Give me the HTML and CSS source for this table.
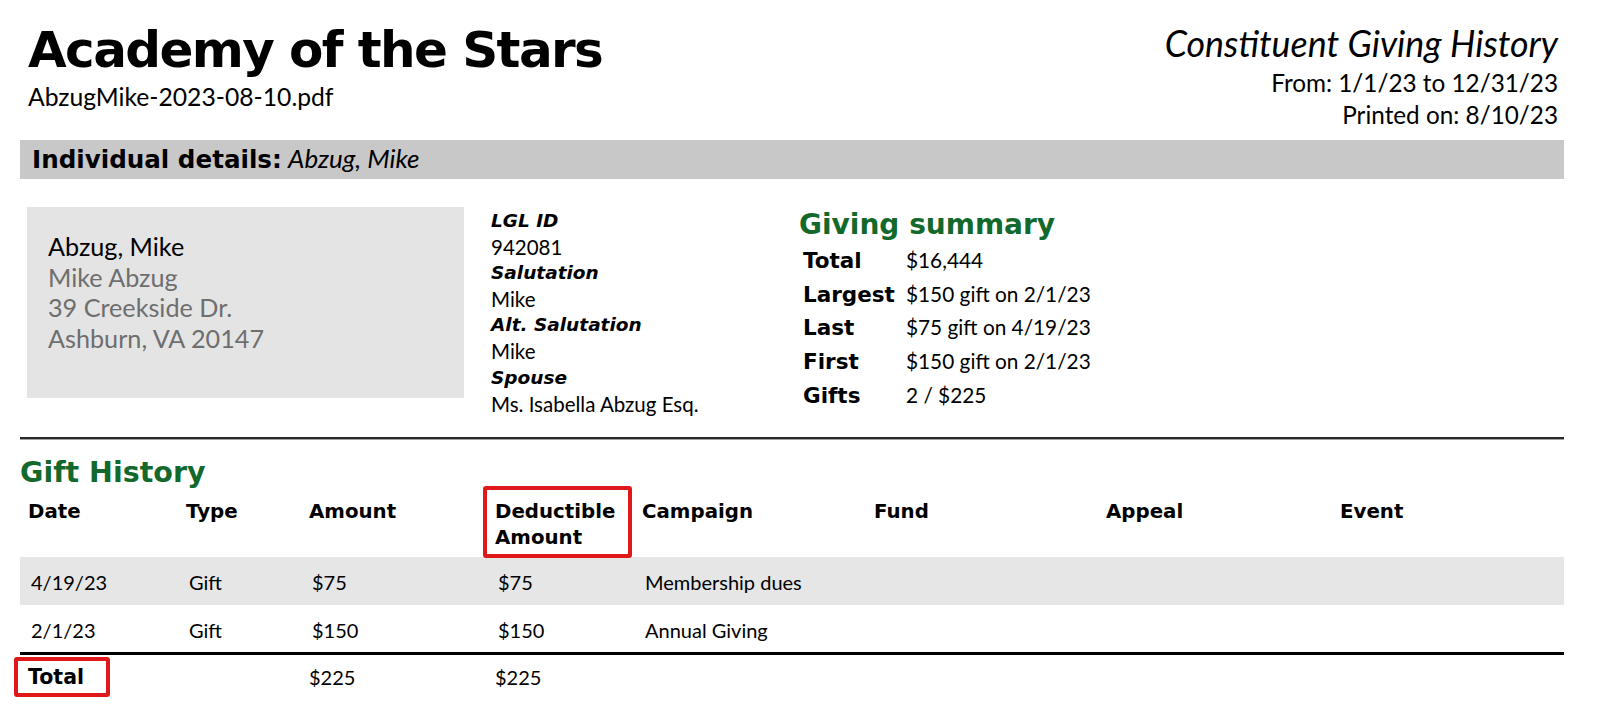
FILE: index.html
```html
<!DOCTYPE html>
<html lang="en">
<head>
<meta charset="utf-8">
<title>Constituent Giving History</title>
<link rel="stylesheet" href="styles.css">
</head>
<body>
<div class="page">
  <header class="top">
    <div class="org">
      <h1 class="org-name">Academy of the Stars</h1>
      <div class="file-name">AbzugMike-2023-08-10.pdf</div>
    </div>
    <div class="report">
      <div class="report-title">Constituent Giving History</div>
      <div class="report-line range">From: 1/1/23 to 12/31/23</div>
      <div class="report-line">Printed on: 8/10/23</div>
    </div>
  </header>

  <div class="section-bar"><b class="bar-label">Individual details:</b> <i class="bar-name">Abzug, Mike</i></div>

  <section class="details">
    <div class="address">
      <div class="addr-name">Abzug, Mike</div>
      <div class="addr-line">Mike Abzug</div>
      <div class="addr-line">39 Creekside Dr.</div>
      <div class="addr-line">Ashburn, VA 20147</div>
    </div>
    <dl class="ids">
      <dt>LGL ID</dt><dd>942081</dd>
      <dt>Salutation</dt><dd>Mike</dd>
      <dt>Alt. Salutation</dt><dd>Mike</dd>
      <dt>Spouse</dt><dd>Ms. Isabella Abzug Esq.</dd>
    </dl>
    <div class="summary">
      <h2 class="green-title">Giving summary</h2>
      <div class="sum-grid">
        <div class="sum-label">Total</div><div class="sum-val">$16,444</div>
        <div class="sum-label">Largest</div><div class="sum-val">$150 gift on 2/1/23</div>
        <div class="sum-label">Last</div><div class="sum-val">$75 gift on 4/19/23</div>
        <div class="sum-label">First</div><div class="sum-val">$150 gift on 2/1/23</div>
        <div class="sum-label">Gifts</div><div class="sum-val">2 / $225</div>
      </div>
    </div>
  </section>

  <hr class="rule">

  <h2 class="green-title history-title">Gift History</h2>
  <table class="gifts">
    <colgroup>
      <col class="c-date"><col class="c-type"><col class="c-amt"><col class="c-ded">
      <col class="c-camp"><col class="c-fund"><col class="c-appeal"><col class="c-event">
    </colgroup>
    <thead>
      <tr>
        <th>Date</th><th>Type</th><th>Amount</th>
        <th class="marked">Deductible<br>Amount</th>
        <th>Campaign</th><th>Fund</th><th>Appeal</th><th>Event</th>
      </tr>
    </thead>
    <tbody>
      <tr class="stripe">
        <td>4/19/23</td><td>Gift</td><td>$75</td><td>$75</td><td>Membership dues</td><td></td><td></td><td></td>
      </tr>
      <tr>
        <td>2/1/23</td><td>Gift</td><td>$150</td><td>$150</td><td>Annual Giving</td><td></td><td></td><td></td>
      </tr>
    </tbody>
    <tfoot>
      <tr>
        <th class="marked-total">Total</th><td></td><td>$225</td><td>$225</td><td></td><td></td><td></td><td></td>
      </tr>
    </tfoot>
  </table>
</div>
</body>
</html>
```

FILE: styles.css
```css
*, *::before, *::after { box-sizing: border-box; }

html, body {
  margin: 0;
  padding: 0;
  background: #ffffff;
}

body {
  font-family: "Lato", "Open Sans", "DejaVu Sans", sans-serif;
  color: #000;
}

.page {
  width: 1544px;
  margin-left: 20px;
  padding-bottom: 20px;
}

/* bold text uses a heavier, wider face */
.org-name,
.bar-label,
.ids dt,
.green-title,
.sum-label,
.gifts thead th,
.gifts tfoot th {
  font-family: "DejaVu Sans", "Lato", sans-serif;
  font-weight: 700;
}

/* ---------- header ---------- */
.top {
  display: flex;
  justify-content: space-between;
  align-items: flex-start;
  padding: 20px 6px 0 8px;
  height: 140px;
}

.org-name {
  margin: 0;
  font-size: 50px;
  line-height: 60px;
  letter-spacing: -1.6px;
}

.file-name {
  margin-top: 2px;
  font-size: 24.7px;
  line-height: 30px;
}

.report {
  text-align: right;
  padding-top: 3px;
}

.report-title {
  font-size: 35.8px;
  line-height: 42px;
  font-style: italic;
}

.report-line {
  font-size: 24.3px;
  line-height: 32px;
}

.report-line.range {
  margin-top: 2px;
}

/* ---------- section bar ---------- */
.section-bar {
  background: #c8c8c8;
  height: 39px;
  padding: 0 12px;
  font-size: 24px;
  line-height: 37px;
  white-space: nowrap;
}

.bar-label {
  font-size: 24.6px;
}

.bar-name {
  font-size: 26px;
}

/* ---------- details ---------- */
.details {
  display: flex;
  align-items: flex-start;
  margin-top: 28px;
}

.address {
  width: 437px;
  height: 191px;
  margin-left: 7px;
  background: #e4e4e4;
  padding: 24px 21px 0;
  font-size: 25.2px;
  line-height: 30.6px;
}

.addr-name { color: #000; }
.addr-line { color: #6e6e6e; }

.ids {
  margin: 1px 0 0 27px;
  width: 281px;
  font-size: 20.5px;
  line-height: 26.1px;
}

.ids dt {
  font-style: italic;
  font-size: 18.5px;
}

.ids dd { margin: 0; }

.summary {
  margin-left: 27px;
}

.green-title {
  margin: 2px 0 0;
  color: #12692b;
  font-size: 28px;
  line-height: 32px;
}

.sum-grid {
  display: grid;
  grid-template-columns: 103px auto;
  align-items: baseline;
  margin: 3px 0 0 4px;
  font-size: 20.8px;
  line-height: 32.7px;
}

.sum-label { font-size: 21.5px; }

/* ---------- rule ---------- */
.rule {
  margin: 20px 0 0;
  border: 0;
  border-top: 2px solid #2a2a2a;
  border-bottom: 1px solid #a0a0a0;
  height: 0;
}

.history-title {
  margin: 17px 0 0;
  font-size: 28.5px;
  line-height: 32px;
}

/* ---------- gift table ---------- */
.gifts {
  width: 1544px;
  table-layout: fixed;
  border-collapse: collapse;
  font-size: 20px;
}

.c-date { width: 158px; }
.c-type { width: 123px; }
.c-amt { width: 186px; }
.c-ded { width: 147px; }
.c-camp { width: 232px; }
.c-fund { width: 232px; }
.c-appeal { width: 234px; }
.c-event { width: 232px; }

.gifts thead th {
  text-align: left;
  vertical-align: top;
  font-size: 19.8px;
  line-height: 26px;
  padding: 10px 4px 5px 8px;
  height: 68px;
}

.gifts tbody td {
  height: 48px;
  padding: 3px 4px 0 11px;
  line-height: 44px;
  vertical-align: top;
}

.gifts tbody tr.stripe td {
  background: #e6e6e6;
}

.gifts tfoot th,
.gifts tfoot td {
  border-top: 3px solid #000;
  text-align: left;
  padding: 4px 4px 5px 8px;
  line-height: 36px;
  height: 48px;
  vertical-align: top;
}

.gifts tfoot th {
  font-size: 20.5px;
}

.marked,
.marked-total {
  position: relative;
}

.marked::after {
  content: "";
  position: absolute;
  left: -4px;
  right: 2px;
  top: -3px;
  bottom: -1px;
  border: 4px solid #e0181a;
  border-radius: 3px;
}

.marked-total::after {
  content: "";
  position: absolute;
  left: -6px;
  top: 2px;
  width: 96px;
  height: 40px;
  border: 4px solid #e0181a;
  border-radius: 3px;
}
```
